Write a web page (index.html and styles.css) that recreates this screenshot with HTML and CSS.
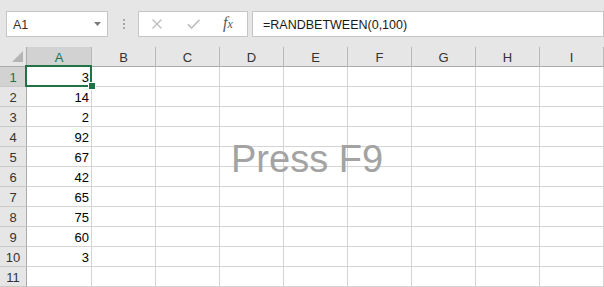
FILE: index.html
```html
<!DOCTYPE html>
<html>
<head>
<meta charset="utf-8">
<link rel="stylesheet" href="styles.css">
</head>
<body>
<div class="app">
  <div class="toolbar">
    <div class="namebox">
      <span class="nb-text">A1</span>
      <svg class="nb-arrow" width="7" height="4" viewBox="0 0 7 4"><polygon points="0,0 7,0 3.5,4" fill="#7a7a7a"/></svg>
    </div>
    <div class="sep"><i></i><i></i><i></i></div>
    <div class="fxbox">
      <svg class="ic-x" width="12" height="10" viewBox="0 0 12 10"><path d="M1.5 0.5 L10.5 9.5 M10.5 0.5 L1.5 9.5" stroke="#bcbcbc" stroke-width="1.3" fill="none"/></svg>
      <svg class="ic-ok" width="13" height="10" viewBox="0 0 13 10"><path d="M0.8 5.2 L4.6 9 L12.4 0.8" stroke="#bcbcbc" stroke-width="1.6" fill="none"/></svg>
      <span class="fx"><span class="fx-f">f</span><span class="fx-x">x</span></span>
    </div>
    <div class="formula">=RANDBETWEEN(0,100)</div>
  </div>
  <div class="sheet">
    <div class="grid">
      <div class="corner"><svg width="26" height="19" viewBox="0 0 26 19"><polygon points="12,15 23,15 23,4" fill="#b5b5b5"/></svg></div>
      <div class="ch sel">A</div>
      <div class="ch">B</div>
      <div class="ch">C</div>
      <div class="ch">D</div>
      <div class="ch">E</div>
      <div class="ch">F</div>
      <div class="ch">G</div>
      <div class="ch">H</div>
      <div class="ch">I</div>

      <div class="rh sel">1</div><div class="c n">3</div><div class="c"></div><div class="c"></div><div class="c"></div><div class="c"></div><div class="c"></div><div class="c"></div><div class="c"></div><div class="c"></div>
      <div class="rh">2</div><div class="c n">14</div><div class="c"></div><div class="c"></div><div class="c"></div><div class="c"></div><div class="c"></div><div class="c"></div><div class="c"></div><div class="c"></div>
      <div class="rh">3</div><div class="c n">2</div><div class="c"></div><div class="c"></div><div class="c"></div><div class="c"></div><div class="c"></div><div class="c"></div><div class="c"></div><div class="c"></div>
      <div class="rh">4</div><div class="c n">92</div><div class="c"></div><div class="c"></div><div class="c"></div><div class="c"></div><div class="c"></div><div class="c"></div><div class="c"></div><div class="c"></div>
      <div class="rh">5</div><div class="c n">67</div><div class="c"></div><div class="c"></div><div class="c"></div><div class="c"></div><div class="c"></div><div class="c"></div><div class="c"></div><div class="c"></div>
      <div class="rh">6</div><div class="c n">42</div><div class="c"></div><div class="c"></div><div class="c"></div><div class="c"></div><div class="c"></div><div class="c"></div><div class="c"></div><div class="c"></div>
      <div class="rh">7</div><div class="c n">65</div><div class="c"></div><div class="c"></div><div class="c"></div><div class="c"></div><div class="c"></div><div class="c"></div><div class="c"></div><div class="c"></div>
      <div class="rh">8</div><div class="c n">75</div><div class="c"></div><div class="c"></div><div class="c"></div><div class="c"></div><div class="c"></div><div class="c"></div><div class="c"></div><div class="c"></div>
      <div class="rh">9</div><div class="c n">60</div><div class="c"></div><div class="c"></div><div class="c"></div><div class="c"></div><div class="c"></div><div class="c"></div><div class="c"></div><div class="c"></div>
      <div class="rh">10</div><div class="c n">3</div><div class="c"></div><div class="c"></div><div class="c"></div><div class="c"></div><div class="c"></div><div class="c"></div><div class="c"></div><div class="c"></div>
      <div class="rh">11</div><div class="c"></div><div class="c"></div><div class="c"></div><div class="c"></div><div class="c"></div><div class="c"></div><div class="c"></div><div class="c"></div><div class="c"></div>
    </div>
    <div class="selection"></div>
    <div class="handle"></div>
    <div class="watermark">Press F9</div>
  </div>
</div>
</body>
</html>
```

FILE: styles.css
```css
* { box-sizing: border-box; }
html, body { margin: 0; padding: 0; background: #ffffff; }
body { width: 604px; height: 287px; overflow: hidden; font-family: "Liberation Sans", Arial, sans-serif; }

.app { width: 604px; height: 287px; display: flex; flex-direction: column; }

.toolbar {
  height: 47px;
  background: #e6e6e6;
  display: flex;
  align-items: flex-start;
  padding: 11px 0 0 6px;
}
.namebox {
  width: 102px; height: 26px;
  background: #ffffff;
  border: 1px solid #c6c6c6;
  display: flex; align-items: flex-start;
  padding: 2px 0 0 6px;
}
.nb-text { font-size: 12.5px; line-height: 22px; color: #333; flex: 1; }
.nb-arrow { margin: 8px 6px 0 0; }

.sep { width: 30px; height: 26px; display: flex; flex-direction: column; padding: 8px 0 0 15px; gap: 2px; }
.sep i { display: block; width: 2px; height: 2px; background: #a9a9a9; }

.fxbox {
  width: 110px; height: 26px;
  background: #ffffff;
  border: 1px solid #c6c6c6;
  display: flex; align-items: center;
  padding-left: 12px;
}
.ic-x { margin-right: 24px; }
.ic-ok { margin-right: 23px; }
.fx { font-family: "Liberation Serif", "Times New Roman", serif; font-style: italic; color: #5a5a5a; line-height: 14px; display: flex; align-items: baseline; margin-top: -1px; }
.fx-f { font-size: 16px; }
.fx-x { font-size: 12px; margin-left: 0; }

.formula {
  margin-left: 4px;
  width: 352px; height: 26px;
  background: #ffffff;
  border: 1px solid #c6c6c6;
  border-right-color: #c6c6c6;
  padding: 2px 0 0 10px;
  font-size: 12.5px; line-height: 22px; color: #1a1a1a;
}

.sheet { position: relative; flex: 1; }
.grid {
  display: grid;
  grid-template-columns: 27px 65px repeat(8, 64px);
  grid-auto-rows: 20px;
}
.corner { background: #e6e6e6; border-right: 1px solid #ababab; border-bottom: 1px solid #ababab; }
.corner svg { display: block; }
.ch {
  background: #e6e6e6;
  border-right: 1px solid #b9b9b9;
  border-bottom: 1px solid #ababab;
  text-align: center;
  font-size: 13px; line-height: 16px; padding-top: 3px;
  color: #333;
}
.ch.sel { background: #d2d2d2; color: #217346; }
.rh {
  background: #e6e6e6;
  border-right: 1px solid #ababab;
  border-bottom: 1px solid #c9c9c9;
  text-align: center;
  font-size: 13px; line-height: 16px; padding-top: 3px;
  color: #333;
}
.rh.sel { background: #d2d2d2; color: #217346; }
.c {
  border-right: 1px solid #d4d4d4;
  border-bottom: 1px solid #d4d4d4;
  font-size: 13px; line-height: 16px; padding-top: 3px;
  color: #000;
}
.c.n { text-align: right; padding-right: 2px; }

.selection {
  position: absolute; left: 25px; top: 18px;
  width: 67px; height: 22px;
  border: 2px solid #217346;
}
.handle {
  position: absolute; left: 88px; top: 35px;
  width: 8px; height: 8px;
  background: #217346;
  border: 1px solid #ffffff;
}
.watermark {
  position: absolute; left: 231px; top: 93px;
  font-size: 38px; line-height: 38px;
  color: #a3a3a3;
  white-space: nowrap;
}
```
